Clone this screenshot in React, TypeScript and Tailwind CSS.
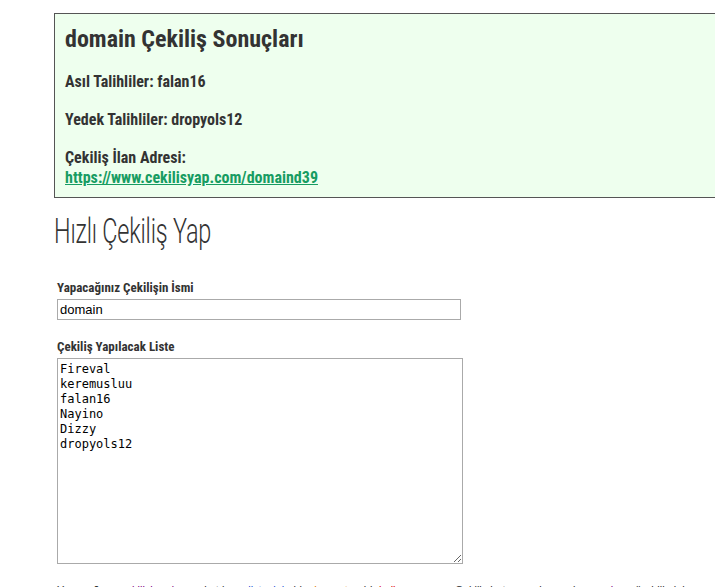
import { useState } from "react";

const cond = "font-['Roboto_Condensed','Roboto',sans-serif]";

const participants = ["Fireval", "keremusluu", "falan16", "Nayino", "Dizzy", "dropyols12"];

const App = () => {
  const [name, setName] = useState("domain");
  const [list, setList] = useState(participants.join("\n"));

  return (
    <div className="h-[587px] w-[715px] overflow-hidden bg-white text-[#333]">
      <div className="w-[1100px] pl-[54px] pt-[13px]">
        {/* result box */}
        <div className={`border border-[#555] bg-[#eeffee] px-[10px] pt-[11px] pb-[9px] ${cond}`}>
          <h2 className="text-[24px] font-bold leading-[29px]">{name} Çekiliş Sonuçları</h2>
          <p className="mt-[18px] text-[16px] font-bold leading-[20px]">Asıl Talihliler: falan16</p>
          <p className="mt-[18px] text-[16px] font-bold leading-[20px]">Yedek Talihliler: dropyols12</p>
          <p className="mt-[18px] text-[16px] font-bold leading-[20px]">
            Çekiliş İlan Adresi:
            <br />
            <a href="#" className="text-[#179c62] underline">
              https://www.cekilisyap.com/domaind39
            </a>
          </p>
        </div>

        <h1 className="mt-[14px] origin-left scale-x-[0.67] font-['Roboto',sans-serif] text-[35px] font-light leading-[40px] tracking-[-0.3px] whitespace-nowrap">
          Hızlı Çekiliş Yap
        </h1>

        <form className="mt-[28px] pl-[3px]">
          <label className={`block text-[13px] font-bold leading-[16px] ${cond}`}>
            Yapacağınız Çekilişin İsmi
          </label>
          <input
            value={name}
            onChange={(e) => setName(e.target.value)}
            className="mt-[3px] block h-[21px] w-[404px] border border-[#aaa] px-[2px] font-['Liberation_Sans',Arial,sans-serif] text-[13px] text-black outline-none"
          />

          <label className={`mt-[19px] block text-[13px] font-bold leading-[16px] ${cond}`}>
            Çekiliş Yapılacak Liste
          </label>
          <textarea
            value={list}
            onChange={(e) => setList(e.target.value)}
            className="mt-[3px] block h-[206px] w-[406px] border border-[#aaa] px-[2px] pt-[3px] pb-[1px] font-['DejaVu_Sans_Mono',monospace] text-[12px] leading-[15px] text-black outline-none"
          />

          <p className="mt-[19px] font-['Liberation_Sans',Arial,sans-serif] text-[11px] leading-[14px] whitespace-nowrap">
            Yapacağınız <span className="text-[#800080]">çekilişin adını</span> ve katılımcı{" "}
            <span className="text-[#1a4fd6]">listesini</span> girin,{" "}
            <span className="text-[#e07b00]">her satıra</span> bir{" "}
            <span className="text-[#d00]">kullanıcı</span> yazın. Çekiliş butonuna basarak{" "}
            <span className="text-[#800080]">sonuçları</span> görebilirsiniz.
          </p>
        </form>
      </div>
    </div>
  );
};

export default App;
